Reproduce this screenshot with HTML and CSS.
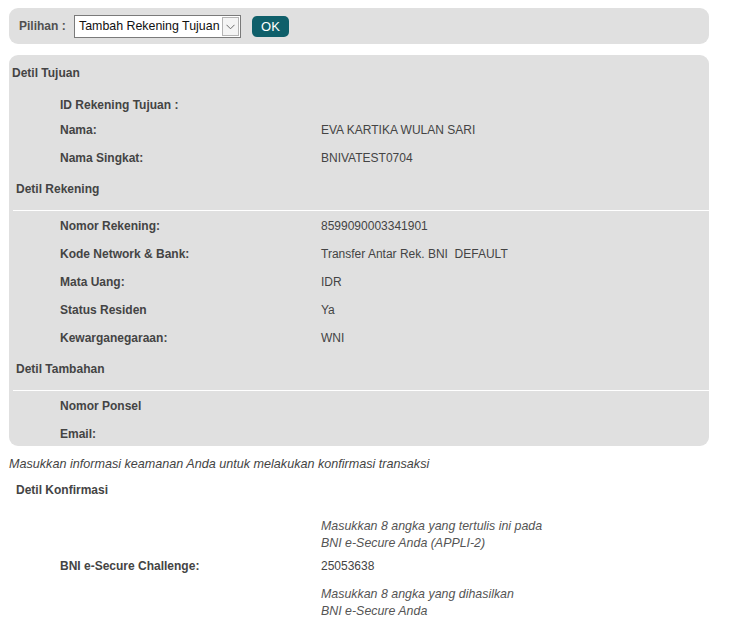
FILE: index.html
```html
<!DOCTYPE html>
<html>
<head>
<meta charset="utf-8">
<link rel="stylesheet" href="styles.css">
</head>
<body>
<div class="page">
  <div class="panel top-panel">
    <span class="pilihan">Pilihan :</span>
    <div class="fake-select">
      <span class="sel-text">Tambah Rekening Tujuan</span>
      <span class="sel-arrow"><svg width="9" height="6" viewBox="0 0 9 6"><path d="M0.5 0.8 L4.5 4.8 L8.5 0.8" fill="none" stroke="#6a6a6a" stroke-width="1"/></svg></span>
    </div>
    <button class="ok-btn">OK</button>
  </div>

  <div class="panel detail-panel">
    <div class="sec-head first">Detil Tujuan</div>
    <div class="row short"><span class="lbl">ID Rekening Tujuan :</span><span class="val"></span></div>
    <div class="row"><span class="lbl">Nama:</span><span class="val">EVA KARTIKA WULAN SARI</span></div>
    <div class="row"><span class="lbl">Nama Singkat:</span><span class="val">BNIVATEST0704</span></div>

    <div class="sec-head">Detil Rekening</div>
    <div class="divider"></div>
    <div class="row"><span class="lbl">Nomor Rekening:</span><span class="val">8599090003341901</span></div>
    <div class="row"><span class="lbl">Kode Network &amp; Bank:</span><span class="val">Transfer Antar Rek. BNI&nbsp; DEFAULT</span></div>
    <div class="row"><span class="lbl">Mata Uang:</span><span class="val">IDR</span></div>
    <div class="row"><span class="lbl">Status Residen</span><span class="val">Ya</span></div>
    <div class="row"><span class="lbl">Kewarganegaraan:</span><span class="val">WNI</span></div>

    <div class="sec-head">Detil Tambahan</div>
    <div class="divider"></div>
    <div class="row"><span class="lbl">Nomor Ponsel</span><span class="val"></span></div>
    <div class="row last"><span class="lbl">Email:</span><span class="val"></span></div>
  </div>

  <div class="info-note">Masukkan informasi keamanan Anda untuk melakukan konfirmasi transaksi</div>
  <div class="konf-head">Detil Konfirmasi</div>
  <div class="challenge">
    <span class="note c2">Masukkan 8 angka yang tertulis ini pada<br>BNI e-Secure Anda (APPLI-2)</span>
    <span class="lbl c1">BNI e-Secure Challenge:</span>
    <span class="val c2 code">25053638</span>
    <span class="note c2 note2">Masukkan 8 angka yang dihasilkan<br>BNI e-Secure Anda</span>
  </div>
</div>
</body>
</html>
```

FILE: styles.css
```css
html, body {
  margin: 0;
  padding: 0;
  background: #ffffff;
}
body {
  font-family: "Liberation Sans", Arial, sans-serif;
  font-size: 12px;
  color: #444444;
}
.page {
  padding: 8px 0 0 9px;
  width: 700px;
}
.panel {
  background: #e0e0e0;
  border-radius: 9px;
}
.top-panel {
  height: 36px;
  display: flex;
  align-items: center;
  box-sizing: border-box;
  padding-left: 10px;
}
.pilihan {
  font-weight: bold;
  color: #505050;
  width: 55px;
}
.fake-select {
  display: flex;
  align-items: stretch;
  box-sizing: border-box;
  width: 167px;
  height: 23px;
  background: #ffffff;
  border: 1px solid #7a7a7a;
  margin-top: 1px;
}
.sel-text {
  flex: 1;
  font-size: 12.4px;
  color: #111111;
  line-height: 21px;
  padding-left: 4px;
  white-space: nowrap;
}
.sel-arrow {
  width: 17px;
  border: 1px solid #b4b4b4;
  margin: 1px 1px 1px 0;
  box-sizing: border-box;
  background: #f4f4f4;
  display: flex;
  align-items: center;
  justify-content: center;
}
.ok-btn {
  margin-left: 11px;
  width: 37px;
  height: 21px;
  border: none;
  border-radius: 5px;
  background: #0f5f6a;
  color: #ffffff;
  font-family: "Liberation Sans", Arial, sans-serif;
  font-size: 13px;
  padding: 0;
  margin-top: 1px;
}
.detail-panel {
  margin-top: 11px;
  padding: 4px 0 0 0;
}
.sec-head {
  font-weight: bold;
  color: #444444;
  height: 28px;
  line-height: 28px;
  padding-left: 7px;
  margin-top: 3px;
}
.sec-head.first {
  padding-left: 3px;
  margin-top: 0;
}
.divider {
  height: 1px;
  background: #ffffff;
  margin: 7px 0 1px 4px;
}
.row {
  display: grid;
  grid-template-columns: 261px 1fr;
  padding-left: 51px;
  height: 28px;
  line-height: 28px;
}
.row.short {
  height: 22px;
  line-height: 22px;
  margin-top: 7px;
}
.row.last {
  height: 26px;
}
.lbl {
  font-weight: bold;
  color: #444444;
}
.val {
  color: #444444;
}
.info-note {
  font-style: italic;
  font-size: 12.6px;
  color: #444444;
  line-height: 16px;
  margin-top: 10px;
}
.konf-head {
  font-weight: bold;
  line-height: 20px;
  margin-top: 8px;
  padding-left: 7px;
}
.challenge {
  display: grid;
  grid-template-columns: 261px 1fr;
  padding-left: 51px;
  margin-top: 18px;
}
.c1 { grid-column: 1; grid-row: 2; line-height: 28px; }
.c2 { grid-column: 2; }
.note {
  font-style: italic;
  font-size: 12.4px;
  line-height: 17px;
  color: #555555;
}
.code {
  grid-row: 2;
  line-height: 28px;
}
.note2 {
  grid-row: 3;
  margin-top: 6px;
}
```
